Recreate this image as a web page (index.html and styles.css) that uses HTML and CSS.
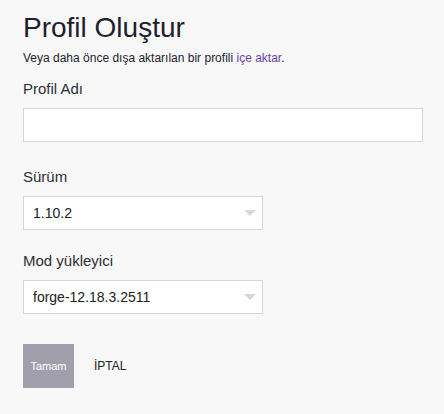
FILE: index.html
```html
<!DOCTYPE html>
<html lang="tr">
<head>
    <meta charset="UTF-8">
    <title>Profil Oluştur</title>
    <link rel="stylesheet" href="styles.css">
</head>
<body>
    <div class="page">
        <h1 class="title">Profil Oluştur</h1>
        <p class="subtitle">Veya daha önce dışa aktarılan bir profili <a href="#">içe aktar</a>.</p>

        <div class="field field-name">
            <label class="field-label">Profil Adı</label>
            <input type="text" class="text-input">
        </div>

        <div class="field field-version">
            <label class="field-label">Sürüm</label>
            <div class="select">
                <span class="select-value">1.10.2</span>
                <span class="select-arrow"></span>
            </div>
        </div>

        <div class="field field-loader">
            <label class="field-label">Mod yükleyici</label>
            <div class="select">
                <span class="select-value">forge-12.18.3.2511</span>
                <span class="select-arrow"></span>
            </div>
        </div>

        <div class="actions">
            <button class="btn-primary">Tamam</button>
            <button class="btn-flat">İPTAL</button>
        </div>
    </div>
</body>
</html>
```

FILE: styles.css
```css
body {
    margin: 0;
    background-color: #f8f8f8;
    font-family: "Liberation Sans", Arial, sans-serif;
    color: #222230;
}

.page {
    padding: 8px 23px 0;
}

.title {
    margin: 0;
    font-size: 28px;
    font-weight: normal;
    line-height: 40px;
    color: #1e1e2c;
}

.subtitle {
    margin: 2px 0 0;
    font-size: 12px;
    line-height: 16px;
}

.subtitle a {
    color: #6a3fa8;
    text-decoration: none;
}

.field {
    display: flex;
    flex-direction: column;
}

.field-name {
    margin-top: 14px;
}

.field-version {
    margin-top: 26px;
}

.field-loader {
    margin-top: 22px;
}

.field-label {
    font-size: 15px;
    line-height: 18px;
    color: #2e2e36;
    margin-bottom: 10px;
}

.text-input {
    width: 400px;
    height: 34px;
    box-sizing: border-box;
    border: 1px solid #d6d5db;
    background: #ffffff;
    margin: 0;
    padding: 0 10px;
}

.select {
    width: 240px;
    height: 34px;
    box-sizing: border-box;
    border: 1px solid #d6d5db;
    background: #ffffff;
    display: flex;
    align-items: center;
    justify-content: space-between;
    padding: 0 6px 0 9px;
    font-size: 14px;
    color: #222;
}

.select-arrow {
    width: 0;
    height: 0;
    border-left: 6px solid transparent;
    border-right: 6px solid transparent;
    border-top: 6px solid #d8d6dc;
}

.actions {
    display: flex;
    align-items: center;
    margin-top: 30px;
}

.btn-primary {
    width: 51px;
    height: 44px;
    border: none;
    background-color: #a29fac;
    color: #ffffff;
    font-family: inherit;
    font-size: 11px;
    padding: 0;
}

.btn-flat {
    border: none;
    background: none;
    color: #222;
    font-family: inherit;
    font-size: 12px;
    margin-left: 15px;
    padding: 0 5px;
}
```
